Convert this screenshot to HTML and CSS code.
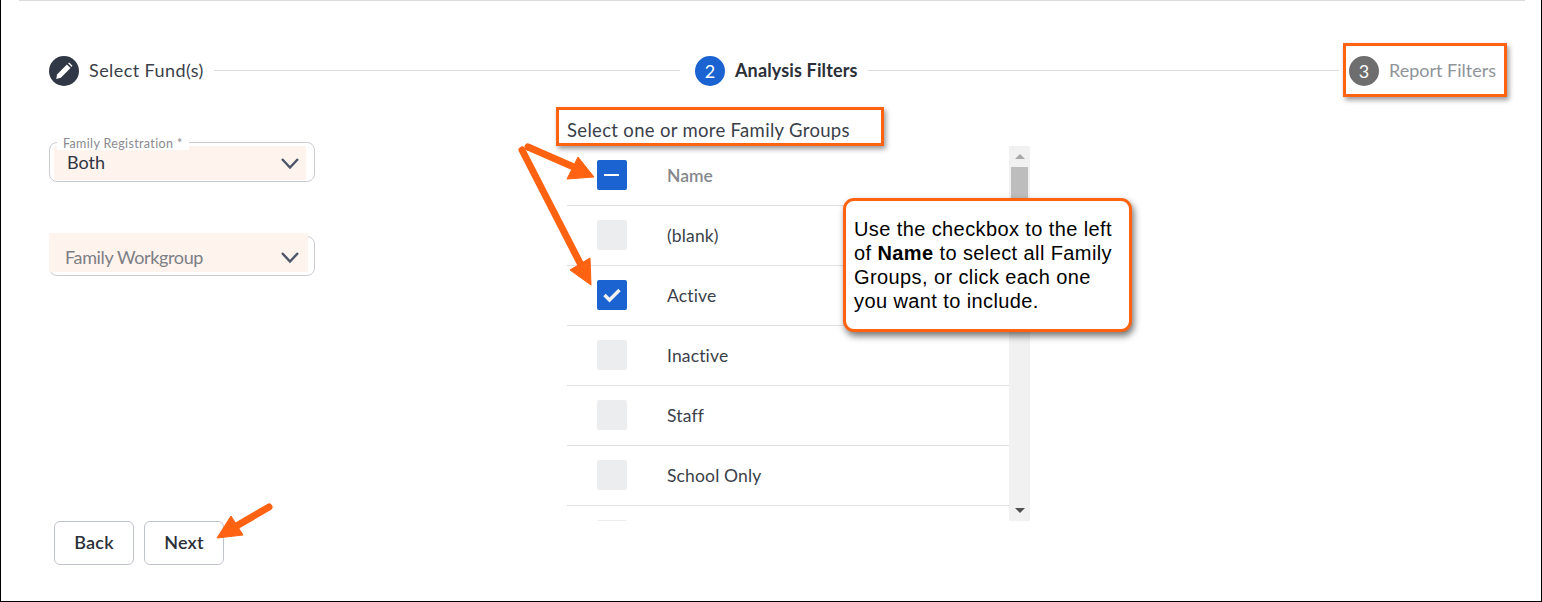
FILE: index.html
```html
<!DOCTYPE html>
<html lang="en">
<head>
<meta charset="utf-8">
<title>Analysis Filters</title>
<link rel="stylesheet" href="styles.css">
</head>
<body>
<div class="frame">
  <div class="topline"></div>
  <div class="stepper">
    <div class="step step-one">
      <span class="dot dot-dark">
        <svg class="pencil" width="18" height="18" viewBox="0 0 16 16"><path d="M1 15l1-4.2L10.6 2.2l3.2 3.2L5.2 14z" fill="#fff"/><path d="M11.6 1.2l1-.7 2.9 2.9-.7 1z" fill="#fff"/></svg>
      </span>
      <span class="step-label">Select Fund(s)</span>
    </div>
    <div class="line line-one"></div>
    <div class="step step-two">
      <span class="dot dot-blue">2</span>
      <span class="step-label step-active">Analysis Filters</span>
    </div>
    <div class="line line-two"></div>
    <div class="step step-three">
      <span class="dot dot-grey">3</span>
      <span class="step-label step-muted">Report Filters</span>
    </div>
  </div>

  <div class="main">
    <div class="left">
      <div class="fields">
        <div class="field">
          <span class="field-label">Family Registration *</span>
          <div class="field-fill fill-one"><span class="field-value">Both</span></div>
          <svg class="chevron" width="20" height="14" viewBox="0 0 20 14"><path d="M2 2l8 8.5L18 2" fill="none" stroke="#4d5568" stroke-width="2.4"/></svg>
        </div>
        <div class="field">
          <div class="field-fill fill-two"><span class="field-placeholder">Family Workgroup</span></div>
          <svg class="chevron" width="20" height="14" viewBox="0 0 20 14"><path d="M2 2l8 8.5L18 2" fill="none" stroke="#4d5568" stroke-width="2.4"/></svg>
        </div>
      </div>
      <div class="buttons">
        <button class="btn">Back</button>
        <button class="btn">Next</button>
      </div>
    </div>

    <div class="center">
      <h2 class="heading">Select one or more Family Groups</h2>
      <div class="listwrap">
        <div class="list">
          <div class="row row-head">
            <span class="box box-on"><svg width="16" height="16" viewBox="0 0 16 16"><rect x="0" y="7" width="15" height="2" fill="#fff"/></svg></span>
            <span class="row-title">Name</span>
          </div>
          <div class="row"><span class="box"></span><span class="row-text">(blank)</span></div>
          <div class="row">
            <span class="box box-on"><svg width="20" height="16" viewBox="0 0 20 16"><path d="M2.5 8l5 5L17.5 3" fill="none" stroke="#f1f1f1" stroke-width="3.4"/></svg></span>
            <span class="row-text">Active</span>
          </div>
          <div class="row"><span class="box"></span><span class="row-text">Inactive</span></div>
          <div class="row"><span class="box"></span><span class="row-text">Staff</span></div>
          <div class="row"><span class="box"></span><span class="row-text">School Only</span></div>
          <div class="row"><span class="box"></span><span class="row-text"></span></div>
        </div>
        <div class="scrollbar">
          <span class="tri tri-up"></span>
          <span class="thumb"></span>
          <span class="tri tri-down"></span>
        </div>
      </div>
    </div>
  </div>

  <div class="mark mark-heading"></div>
  <div class="mark mark-step"></div>
  <div class="callout">Use the checkbox to the left of <b>Name</b> to select all Family Groups, or click each one you want to include.</div>
  <svg class="arrows" width="1542" height="602" viewBox="0 0 1542 602">
    <g fill="#ff6210" stroke="#ff6210">
      <path d="M528 147L576 168" stroke-width="7" stroke-linecap="round" fill="none"/>
      <path d="M594 177L578 157L567 179Z" stroke-width="1"/>
      <path d="M522 150L581 265" stroke-width="7" stroke-linecap="round" fill="none"/>
      <path d="M591 285L590 258L570 270Z" stroke-width="1"/>
      <path d="M269 507L233 528" stroke-width="7" stroke-linecap="round" fill="none"/>
      <path d="M217 538L231 516L243 535Z" stroke-width="1"/>
    </g>
  </svg>
</div>
</body>
</html>
```
FILE: styles.css
```css
* { box-sizing: border-box; }
html, body { margin: 0; padding: 0; background: #fff; }
body { font-family: "Lato", "Open Sans", sans-serif; color: #2f3542; }

.frame {
  position: relative;
  width: 1542px;
  height: 602px;
  overflow: hidden;
  border-left: 1px solid #000;
  border-right: 1px solid #000;
  border-bottom: 1px solid #000;
}
.topline { height: 1px; margin: 0 16px 0 18px; background: #dcdcdc; }

.stepper { display: flex; align-items: center; margin: 55px 0 0 48px; height: 30px; }
.step { display: flex; align-items: center; gap: 10px; flex: none; }
.step-one { width: 155px; }
.step-two { width: 163px; }
.step-three { width: 146px; }
.line { height: 1px; background: #dcdcdc; flex: none; margin-left: 10px; margin-bottom: 1px; }
.line-one { width: 466px; margin-right: 15px; }
.line-two { width: 471px; margin-right: 10px; }
.dot {
  width: 30px; height: 30px; border-radius: 50%;
  display: flex; align-items: center; justify-content: center;
  color: #fff; font-size: 18px; flex: none;
}
.dot-dark { background: #2f3844; }
.dot-blue { background: #1a63d1; }
.dot-grey { background: #6e6e6e; }
.step-label { font-size: 18px; color: #3a3f4a; white-space: nowrap; padding-bottom: 2px; letter-spacing: .42px; }
.step-active { font-weight: 700; color: #2b2f38; letter-spacing: .14px; }
.step-muted { color: #8f9499; letter-spacing: 0; }

.main { display: flex; margin: 34px 0 0 48px; }
.left {
  width: 266px; height: 445px; padding-top: 22px;
  display: flex; flex-direction: column; justify-content: space-between; flex: none;
}
.fields { display: flex; flex-direction: column; gap: 54px; }
.field {
  position: relative; height: 40px;
  border: 1px solid #c9ccd1; border-radius: 8px;
}
.field-label {
  position: absolute; left: 7px; top: -5px; padding: 0 6px;
  background: #fff; font-size: 12.5px; line-height: 12px; color: #8a8a90; letter-spacing: .36px;
}
.field-fill { display: flex; align-items: center; background: #fff3ee; }
.fill-one { margin: 3px 8px 0 4px; height: 34px; padding: 0 0 2px 13px; }
.fill-two { margin: -4px 6px 0 -1px; height: 39px; padding: 8px 0 0 16px; }
.field-value { font-size: 18px; color: #2f3542; }
.field-placeholder { font-size: 18px; color: #7c7f85; letter-spacing: -.36px; }
.chevron { position: absolute; right: 14px; top: 14px; }

.buttons { display: flex; gap: 10px; padding-left: 5px; }
.btn {
  width: 80px; height: 44px; padding: 0 0 2px; background: #fff;
  border: 1px solid #bfc3cc; border-radius: 6px;
  font: 600 18px "Lato", sans-serif; letter-spacing: .2px; color: #2b2f38;
}

.center { margin-left: 252px; width: 463px; flex: none; }
.heading {
  margin: 0; height: 26px; font-weight: 400;
  font-size: 18.5px; line-height: 20px; letter-spacing: .32px; color: #3a3f4a;
}
.listwrap { display: flex; height: 375px; overflow: hidden; }
.list { width: 442px; flex: none; }
.row {
  display: flex; align-items: center; height: 60px;
  padding: 0 0 1px 30px; border-bottom: 1px solid #dfe0e2;
}
.box {
  width: 30px; height: 30px; border-radius: 2px; background: #ecedef;
  display: flex; align-items: center; justify-content: center; flex: none;
}
.box-on { background: #1a63d1; }
.row-title { margin-left: 40px; font-size: 17.5px; font-weight: 600; color: #85878c; }
.row-text { margin-left: 40px; font-size: 17.5px; letter-spacing: .15px; color: #3a3f4a; }

.scrollbar { position: relative; width: 21px; background: #f1f1f1; flex: none; }
.thumb { position: absolute; left: 2px; top: 21px; width: 17px; height: 150px; background: #bdbdbd; }
.tri { position: absolute; left: 6px; width: 0; height: 0; border-left: 5px solid transparent; border-right: 5px solid transparent; }
.tri-up { top: 8px; border-bottom: 5px solid #a8a8a8; }
.tri-down { bottom: 8px; border-top: 5px solid #505050; }

.mark {
  position: absolute; border: 3px solid #ff6210;
  box-shadow: 2px 3px 5px rgba(0,0,0,.4);
}
.mark-heading { left: 555px; top: 107px; width: 328px; height: 39px; }
.mark-step { left: 1342px; top: 43px; width: 164px; height: 54px; }
.callout {
  position: absolute; left: 842px; top: 198px; width: 289px; height: 134px;
  padding: 16px 12px 0 8px;
  background: #fff; border: 3.5px solid #ff6210; border-radius: 11px;
  box-shadow: 2px 4px 7px rgba(0,0,0,.55);
  font: 20px/24px "Liberation Sans", Arial, sans-serif; letter-spacing: .4px; color: #000;
}
.arrows { position: absolute; left: -1px; top: 0; pointer-events: none; }
```
